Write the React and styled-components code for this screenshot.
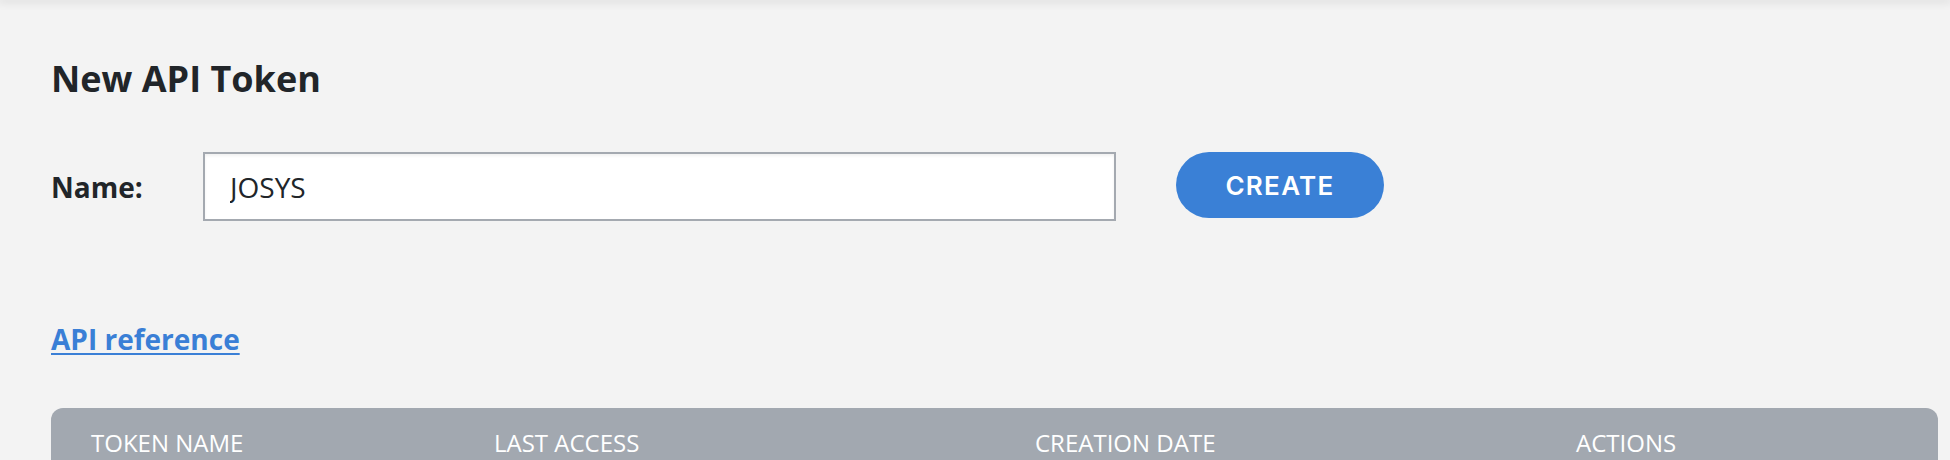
import React, { useState } from "react";
import styled, { createGlobalStyle } from "styled-components";

const GlobalStyle = createGlobalStyle`
    html, body {
        margin: 0;
        padding: 0;
        background: #f3f3f3;
        font-family: "Open Sans", "Liberation Sans", sans-serif;
        color: #212529;
    }
    * {
        box-sizing: border-box;
    }
`;

const TopShadow = styled.div`
    height: 0;
    box-shadow: 0 0 9px 2px rgba(0, 0, 0, 0.13);
`;

const Page = styled.div`
    padding: 54px 12px 0 51px;
    height: 460px;
    overflow: hidden;
`;

const Title = styled.h2`
    margin: 0;
    font-size: 36px;
    font-weight: 700;
    line-height: normal;
`;

const FormRow = styled.div`
    display: flex;
    align-items: center;
    margin-top: 49px;
`;

const Label = styled.label`
    width: 152px;
    font-size: 28px;
    font-weight: 700;
    line-height: normal;
`;

const Input = styled.input`
    width: 913px;
    height: 69px;
    border: 2px solid #a4a9b0;
    background: #fff;
    box-shadow: inset 0 2px 3px rgba(0, 0, 0, 0.06);
    padding: 0 0 0 25px;
    font-family: "Open Sans", "Liberation Sans", sans-serif;
    font-size: 28px;
    color: #212529;
    outline: none;
`;

const Button = styled.button`
    margin-left: 60px;
    width: 208px;
    height: 66px;
    margin-top: -3px;
    border: none;
    border-radius: 33px;
    background: #3a80d6;
    color: #fff;
    font-family: Inter, "Liberation Sans", sans-serif;
    font-weight: 600;
    font-size: 26px;
    letter-spacing: 1.3px;
    cursor: pointer;
`;

const RefLink = styled.a`
    display: inline-block;
    margin-top: 99px;
    font-size: 28px;
    font-weight: 700;
    line-height: normal;
    color: #3a7fd6;
    text-decoration: underline;
    text-decoration-thickness: 2px;
    text-underline-offset: 3px;
`;

const Table = styled.div`
    margin-top: 50px;
`;

const HeaderRow = styled.div`
    display: grid;
    grid-template-columns: 403fr 541fr 541fr 402fr;
    background: #a2a8b0;
    border-radius: 12px 12px 0 0;
    padding: 18px 0;
`;

const HeaderCell = styled.div`
    padding-left: 40px;
    color: #fff;
    font-size: 24px;
    line-height: normal;
    text-transform: uppercase;
`;

const columns = ["Token Name", "Last Access", "Creation Date", "Actions"];

const App = () => {
    const [name, setName] = useState("JOSYS");
    return (
        <>
            <GlobalStyle />
            <TopShadow />
            <Page>
                <Title>New API Token</Title>
                <FormRow>
                    <Label htmlFor="token-name">Name:</Label>
                    <Input
                        id="token-name"
                        value={name}
                        onChange={(e) => setName(e.target.value)}
                    />
                    <Button>CREATE</Button>
                </FormRow>
                <RefLink href="#">API reference</RefLink>
                <Table>
                    <HeaderRow>
                        {columns.map((c) => (
                            <HeaderCell key={c}>{c}</HeaderCell>
                        ))}
                    </HeaderRow>
                </Table>
            </Page>
        </>
    );
};

export default App;
